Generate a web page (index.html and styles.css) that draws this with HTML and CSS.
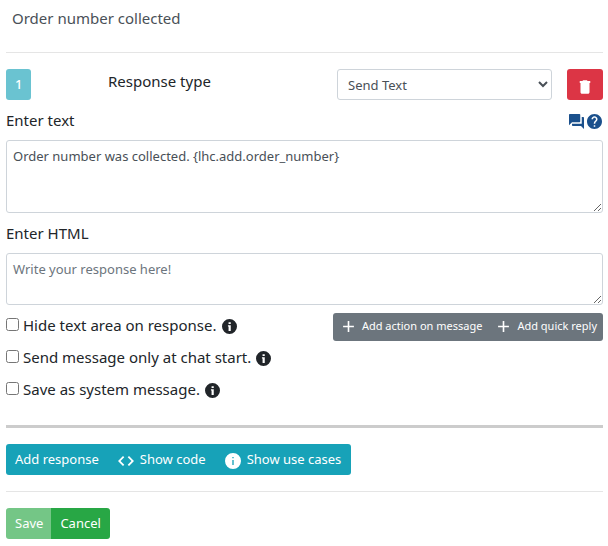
FILE: index.html
```html
<!DOCTYPE html>
<html lang="en">
<head>
<meta charset="utf-8">
<title>Order number collected</title>
<link rel="stylesheet" href="styles.css">
</head>
<body>
<svg class="defs" aria-hidden="true">
  <symbol id="info" viewBox="0 0 24 24"><path fill-rule="evenodd" d="M12 0a12 12 0 1 0 0 24a12 12 0 1 0 0-24zM11 6h2v2h-2zM11 10.500h2V18h-2z"/></symbol>
  <symbol id="info-serif" viewBox="0 0 24 24"><path fill-rule="evenodd" d="M12 0a12 12 0 1 0 0 24a12 12 0 1 0 0-24zM10.500 5h3.500v3h-3.500zM9.500 10h4.500v9h-3.500v-7h-1z"/></symbol>
  <symbol id="plus" viewBox="0 0 24 24"><path d="M22 13.500h-8.500V22h-3v-8.500H2v-3h8.500V2h3v8.500H22z"/></symbol>
</svg>
<form class="editor">
  <h1 class="title">Order number collected</h1>
  <hr class="rule">
  <div class="response">
    <div><button type="button" class="btn index">1</button></div>
    <label for="type">Response type</label>
    <select id="type" class="control"><option>Send Text</option></select>
    <button type="button" class="btn remove" aria-label="Remove">
      <svg class="icon" viewBox="0 0 24 24"><path d="M6 19c0 1.100.9 2 2 2h8c1.100 0 2-.9 2-2V6H6v13zM19 4h-3.500l-1-1h-5l-1 1H5v2.500h14V4z"/></svg>
    </button>
  </div>
  <div class="field-head">
    <label for="text">Enter text</label>
    <span class="links">
      <a href="#" aria-label="Insert text"><svg class="icon" viewBox="2 2 20 20"><path d="M21 6h-2v9H6v2c0 .55.450 1 1 1h11l4 4V7c0-.55-.45-1-1-1zm-4 6V3c0-.55-.45-1-1-1H3c-.55 0-1 .45-1 1v14l4-4h10c.55 0 1-.45 1-1z"/></svg></a>
      <a href="#" aria-label="Help"><svg class="icon" viewBox="2 2 20 20"><path d="M12 2C6.480 2 2 6.480 2 12s4.480 10 10 10 10-4.480 10-10S17.520 2 12 2zm1 17h-2v-2h2v2zm2.070-7.750l-.9.920C13.450 12.900 13 13.500 13 15h-2v-.5c0-1.100.450-2.100 1.170-2.830l1.240-1.260c.37-.36.590-.86.590-1.410 0-1.100-.9-2-2-2s-2 .9-2 2H8c0-2.210 1.790-4 4-4s4 1.790 4 4c0 .88-.36 1.680-.93 2.250z"/></svg></a>
    </span>
  </div>
  <textarea id="text" class="control area tall">Order number was collected. {lhc.add.order_number}</textarea>
  <div class="field-head"><label for="html">Enter HTML</label></div>
  <textarea id="html" class="control area" placeholder="Write your response here!"></textarea>
  <div class="options">
    <div class="checks">
      <label class="check"><input type="checkbox"><span>Hide text area on response.</span><svg class="icon"><use href="#info-serif"/></svg></label>
      <label class="check"><input type="checkbox"><span>Send message only at chat start.</span><svg class="icon"><use href="#info-serif"/></svg></label>
      <label class="check"><input type="checkbox"><span>Save as system message.</span><svg class="icon"><use href="#info-serif"/></svg></label>
    </div>
    <div class="group">
      <button type="button" class="btn small"><svg class="icon"><use href="#plus"/></svg>Add action on message</button>
      <button type="button" class="btn small"><svg class="icon"><use href="#plus"/></svg>Add quick reply</button>
    </div>
  </div>
  <hr class="rule thick">
  <div class="group">
    <button type="button" class="btn teal">Add response</button>
    <button type="button" class="btn teal"><svg class="icon" viewBox="0 0 24 24"><path d="M9.400 17.600L3.800 12l5.600-5.600L7.500 4.500 0 12l7.500 7.500zM14.600 17.600l5.600-5.600-5.600-5.600 1.900-1.900L24 12l-7.500 7.500z"/></svg>Show code</button>
    <button type="button" class="btn teal"><svg class="icon"><use href="#info"/></svg>Show use cases</button>
  </div>
  <hr class="rule">
  <div class="group joined">
    <button type="submit" class="btn green" disabled>Save</button>
    <button type="button" class="btn green">Cancel</button>
  </div>
</form>
</body>
</html>
```
FILE: styles.css
```css
* { box-sizing: border-box; }
body {
  margin: 0;
  background: #fff;
  color: #212529;
  font: 15px/24px "Noto Sans", sans-serif;
}
.defs { position: absolute; width: 0; height: 0; }
.editor { padding: 6px 5px 7px 6px; }
.title {
  margin: 0;
  padding: 0 6px;
  color: #495057;
  font-size: 15px;
  font-weight: 400;
}
.rule {
  margin: 16px 0;
  border: 0;
  border-top: 1px solid #e5e5e5;
}
.title + .rule { margin-top: 22px; }
.rule.thick { margin-top: 24px; border-top: 3px solid #ccc; }
.icon { display: block; width: 15px; height: 15px; fill: currentColor; flex: none; }
.btn {
  display: flex;
  align-items: center;
  gap: 6px;
  height: 31px;
  padding: 0 9px;
  border: 0;
  border-radius: 3px;
  color: #fff;
  font: 13px/21px "Noto Sans", sans-serif;
  white-space: nowrap;
}
.response {
  display: grid;
  grid-template-columns: 102fr 229fr 215fr 51fr;
}
.index { background: #6ac3d1; font-weight: 500; }
.remove { justify-self: end; width: 36px; justify-content: center; background: #dc3545; }
.remove .icon { width: 18px; height: 18px; margin-top: 4px; }
.control {
  display: block;
  width: 100%;
  border: 1px solid #ced4da;
  border-radius: 3px;
  background: #fff;
  color: #495057;
  font: 13px/21px "Noto Sans", sans-serif;
}
select.control { height: 31px; padding: 0 6px; }
.area { height: 52px; padding: 5px 6px; resize: vertical; }
.area.tall { height: 73px; }
.area::placeholder { color: #6c757d; opacity: 1; }
.field-head {
  display: flex;
  justify-content: space-between;
  align-items: center;
  padding: 8px 0;
}
.field-head label { height: 24px; }
.links { display: flex; gap: 3px; padding: 2px 1px 0 0; color: #1b508c; }
.links a { color: inherit; }
.options { display: flex; justify-content: space-between; align-items: flex-start; padding-top: 8px; }
.checks { display: grid; gap: 8px; }
.check { display: flex; align-items: center; }
.check input { width: 13px; height: 13px; margin: 0 4px 2px 0; }
.check .icon { margin: 3px 0 0 5px; }
.group { display: flex; width: max-content; border-radius: 3px; overflow: hidden; }
.group .btn { border-radius: 0; }
.joined .btn + .btn { margin-left: -1px; }
.group .small { gap: 7px; height: 28px; padding: 0 6px 4px 9px; font-size: 11px; background: #6c757d; }
.small .icon { width: 13px; height: 13px; margin-top: 2px; }
.group .teal { padding-right: 10px; background: #17a2b8; }
.teal .icon { width: 16px; height: 16px; margin-top: 3px; }
.green { background: #28a745; }
.green:disabled { background: #74c686; }
```
